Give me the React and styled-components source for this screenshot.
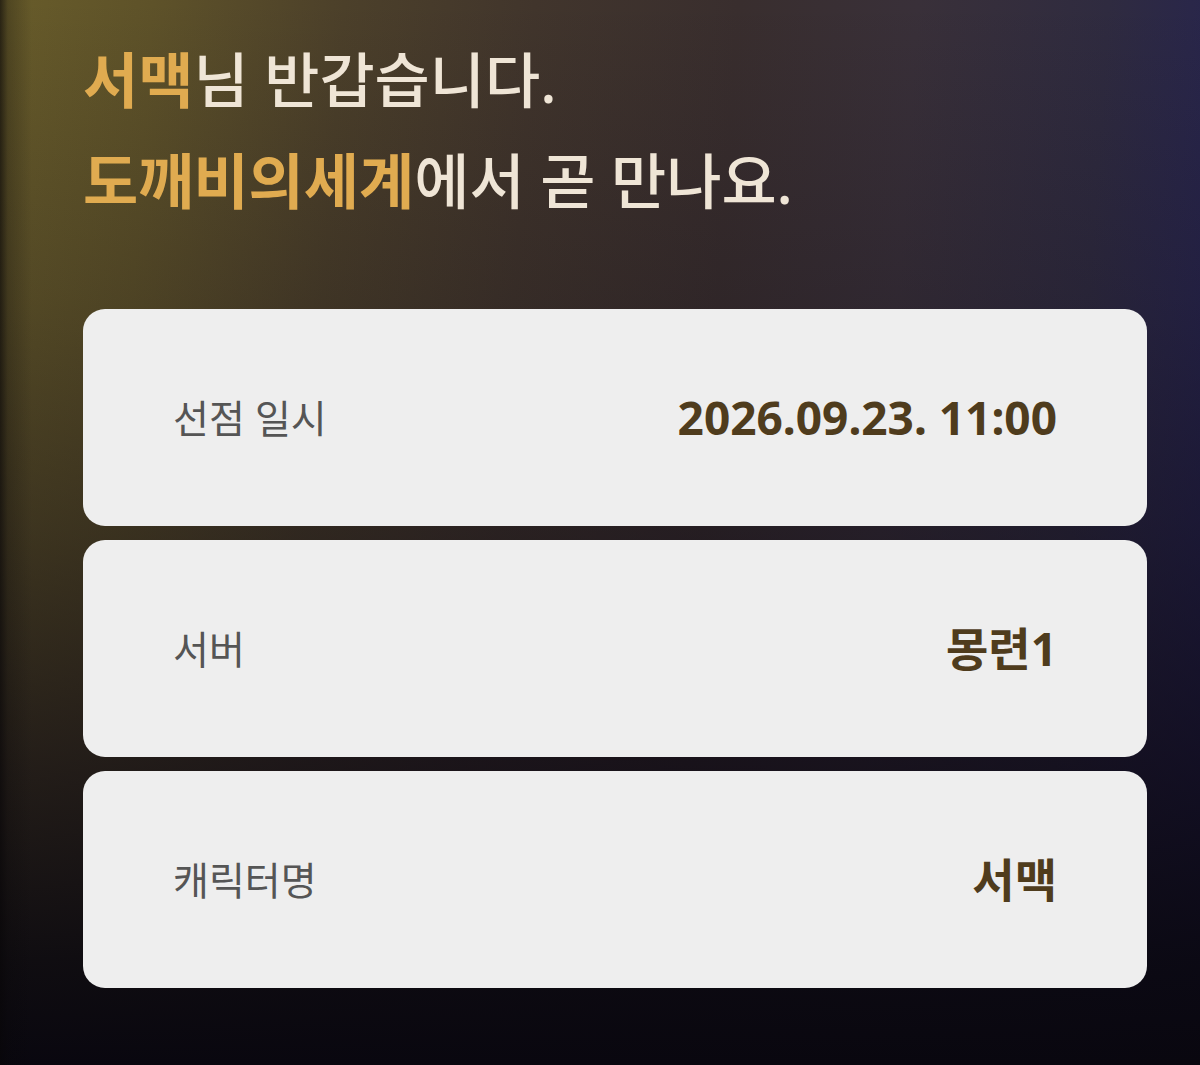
import React from 'react';
import styled, { createGlobalStyle } from 'styled-components';

const GlobalStyle = createGlobalStyle`
  * {
    box-sizing: border-box;
  }

  body {
    margin: 0;
    background: #09070f;
    font-family: 'Noto Sans', 'Noto Sans CJK KR', sans-serif;
  }
`;

const Page = styled.main`
  min-height: 100vh;
  padding: 30px 53px 76px 83px;
  background:
    linear-gradient(to right, rgba(8, 6, 8, 0.65) 0, rgba(8, 6, 8, 0.25) 8px, rgba(8, 6, 8, 0) 32px),
    linear-gradient(
      to bottom,
      rgba(11, 7, 18, 0) 0%,
      rgba(11, 7, 18, 0.2) 28%,
      rgba(11, 7, 18, 0.44) 50%,
      rgba(11, 7, 18, 0.72) 72%,
      rgba(9, 7, 15, 0.92) 90%,
      #09070f 100%
    ),
    linear-gradient(
      94deg,
      #685c2a 0%,
      #5e5229 12%,
      #4c402a 27%,
      #41352c 42%,
      #392e2e 58%,
      #393039 72%,
      #2f2b40 87%,
      #252352 100%
    );
`;

const Greeting = styled.h1`
  margin: 0 0 77px;
  color: #efe5d6;
  font-size: 60px;
  font-weight: 500;
  line-height: 101px;
`;

const Line = styled.span`
  display: block;
`;

const Highlight = styled.strong`
  color: #e0ab50;
  font-weight: 700;
`;

const InfoList = styled.dl`
  display: flex;
  flex-direction: column;
  gap: 14px;
  margin: 0;
`;

const InfoCard = styled.div`
  display: flex;
  align-items: center;
  justify-content: space-between;
  gap: 24px;
  padding: 74px 90px;
  border-radius: 22px;
  background: #eeeeee;
  line-height: 69px;
`;

const Label = styled.dt`
  color: #555555;
  font-size: 39px;
`;

const Value = styled.dd`
  margin: 0;
  color: #4f3c1d;
  font-size: 46px;
  font-weight: 700;
  text-align: right;
`;

const reservation = [
  { label: '선점 일시', value: '2026.09.23. 11:00' },
  { label: '서버', value: '몽련1' },
  { label: '캐릭터명', value: '서맥' },
];

const App = () => (
  <Page lang="ko">
    <GlobalStyle />
    <Greeting>
      <Line>
        <Highlight>서맥</Highlight>님 반갑습니다.
      </Line>
      <Line>
        <Highlight>도깨비의세계</Highlight>에서 곧 만나요.
      </Line>
    </Greeting>
    <InfoList>
      {reservation.map(({ label, value }) => (
        <InfoCard key={label}>
          <Label>{label}</Label>
          <Value>{value}</Value>
        </InfoCard>
      ))}
    </InfoList>
  </Page>
);

export default App;
